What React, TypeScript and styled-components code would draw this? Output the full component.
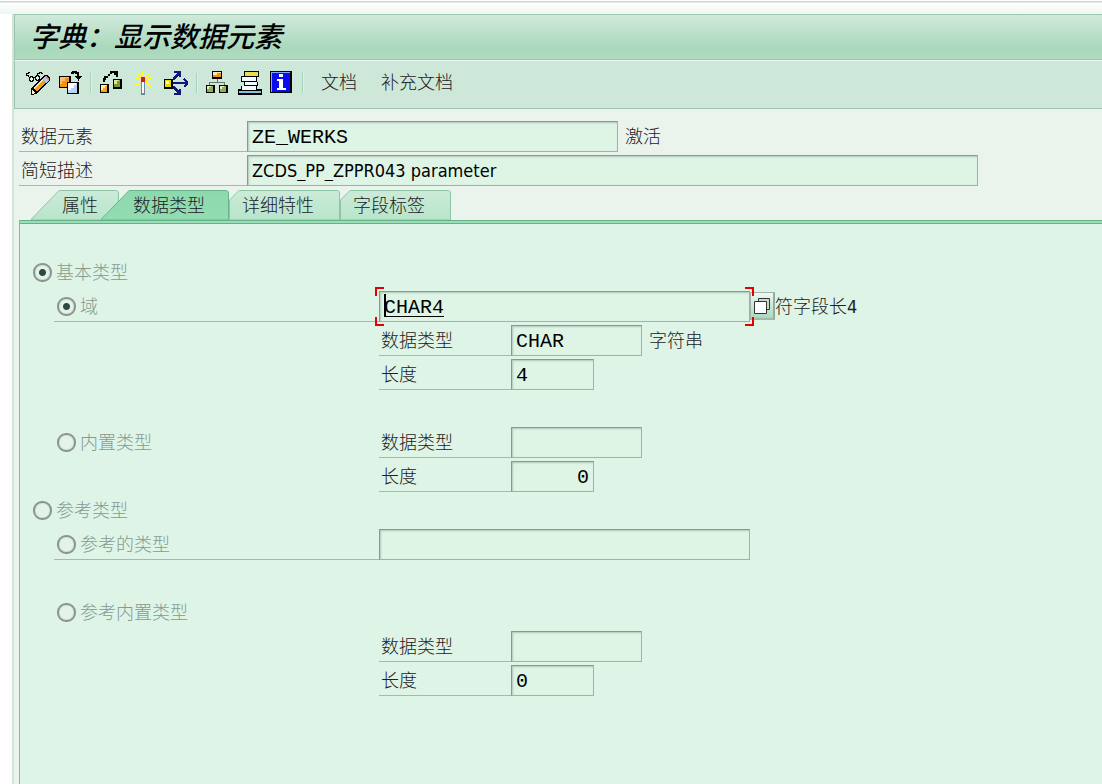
import React, { ReactNode } from "react";
import styled, { createGlobalStyle } from "styled-components";

const Global = createGlobalStyle`
  * { box-sizing: border-box; }
  body { margin: 0; background: #eaf4ed; }
  button, input { font: inherit; color: inherit; }
`;

const cjk = `"DejaVu Sans Condensed", "Noto Sans CJK SC", sans-serif`;

const Page = styled.div`
  min-height: 100vh;
  display: flex;
  flex-direction: column;
  padding: 14px 0 0 12px;
  background: linear-gradient(#fff 1px, #c9d8d0 1px, #c9d8d0 2px, #fff 3px, #eef7f2 14px) no-repeat 0 0 / 100% 14px, #fff;
  font-family: ${cjk};
  font-size: 18px;
  font-weight: 300;
  line-height: 24px;
  color: #1c211e;
  overflow-x: hidden;
`;

const Frame = styled.div`
  flex: 1;
  display: flex;
  flex-direction: column;
  border-left: 2px solid #d3e5da;
  background: #eaf4ed;
`;

const TitleBar = styled.header`
  height: 46px;
  display: flex;
  align-items: center;
  padding-left: 15px;
  border: 1px solid #9cc4ae;
  border-right: 0;
  background: linear-gradient(#d0eadb, #a9d8bc 75%, #b0dcc2);
`;

const Title = styled.h1`
  margin: 0;
  padding-top: 2px;
  font-size: 28px;
  line-height: 36px;
  font-weight: 500;
  font-style: italic;
  color: #000;
`;

const Toolbar = styled.nav`
  height: 49px;
  display: flex;
  align-items: center;
  padding: 0 0 3px 7px;
  border: 1px solid #9cc4ae;
  border-top: 1px solid #edf7f1;
  border-right: 0;
  background: #cde8d8;
`;

const IconButton = styled.button`
  width: 32px;
  height: 28px;
  padding: 0 4px;
  border: 0;
  background: none;
  display: flex;
  align-items: center;
`;

const TextButton = styled.button`
  padding: 0;
  margin-left: 13px;
  margin-right: 11px;
  border: 0;
  background: none;
  white-space: nowrap;
`;

const Separator = styled.span`
  width: 2px;
  height: 20px;
  margin: 0 4px;
  background: #a3d3b8;
  border-right: 1px solid #def1e6;
`;

const Header = styled.section`
  padding: 12px 0 0 5px;
`;

const Line = styled.div`
  display: flex;
  height: 34px;
  align-items: flex-start;
`;

const Label = styled.label<{ $width: number }>`
  width: ${(p) => p.$width}px;
  height: 31px;
  flex: none;
  display: flex;
  align-items: center;
  padding: 2px 0 0 2px;
  border-bottom: 1px solid #a9b8af;
`;

const Field = styled.input<{ $width: number; $font?: "sans"; $right?: boolean; $link?: boolean }>`
  width: ${(p) => p.$width}px;
  height: 31px;
  flex: none;
  padding: ${(p) => (p.$font ? 0 : 2)}px 4px 0;
  border: 1px solid #a3b2a9;
  border-top-color: #8b9890;
  border-left-color: #8b9890;
  border-radius: 0;
  outline: 0;
  background: #def5e6;
  box-shadow: inset 1px 1px 2px #b0c6b9;
  font-family: ${(p) => (p.$font ? `"DejaVu Sans Condensed", sans-serif` : `"Liberation Mono", monospace`)};
  font-size: ${(p) => (p.$font ? 18 : 20)}px;
  line-height: 24px;
  text-align: ${(p) => (p.$right ? "right" : "left")};
  text-decoration: ${(p) => (p.$link ? "underline 1px" : "none")};
  text-underline-offset: 3px;
  color: #000;
`;

const Note = styled.span<{ $gap?: number }>`
  margin-left: ${(p) => p.$gap ?? 7}px;
  padding-top: 1px;
  line-height: 30px;
  white-space: nowrap;
`;

const Tabs = styled.div`
  display: flex;
  height: 31px;
  padding-left: 12px;
`;

const Tab = styled.button<{ $width: number; $pad: number; $lap?: number }>`
  position: relative;
  width: ${(p) => p.$width}px;
  height: 31px;
  flex: none;
  margin-left: ${(p) => p.$lap ?? 0}px;
  padding: 2px 0 0 ${(p) => p.$pad}px;
  border: 0;
  background: none;
  text-align: left;
`;

const TabShape = styled.svg`
  position: absolute;
  inset: 0;
`;

const TabText = styled.span`
  position: relative;
`;

const Panel = styled.main`
  flex: 1;
  margin-left: 5px;
  padding: 36px 0 40px 13px;
  border-left: 1px solid #7fbf9d;
  border-top: 1px solid #62b488;
  background: #def4e6;
  box-shadow: inset 0 2px #9cdcb6, inset 0 3px #62b488;
`;

const Choice = styled.label<{ $indent?: boolean; $ruled?: boolean }>`
  width: 325px;
  height: 31px;
  flex: none;
  display: flex;
  align-items: center;
  gap: 4px;
  margin-left: ${(p) => (p.$indent ? 21 : 0)}px;
  padding-left: ${(p) => (p.$indent ? 3 : 0)}px;
  border-bottom: 1px solid ${(p) => (p.$ruled ? "#a9b8af" : "transparent")};
  color: #869a8f;
`;

const ChoiceText = styled.span`
  padding-top: 2px;
`;

const Radio = styled.input`
  appearance: none;
  width: 19px;
  height: 19px;
  flex: none;
  margin: 0;
  border: 2px solid #89958e;
  border-radius: 9px;
  background: #e3f3e9;
  box-shadow: inset 0 0 0 1px #d2e2d8;
  &:checked {
    background: radial-gradient(circle, #2c4a42 3px, #e3f3e9 4px);
  }
`;

const Details = styled.div`
  margin-left: 346px;
`;

const Beside = styled.div`
  display: flex;
`;

const Focus = styled.div`
  position: relative;
  height: 31px;
`;

const Corners = styled.svg`
  position: absolute;
  left: -4px;
  top: -4px;
  pointer-events: none;
`;

const MatchButton = styled.button`
  width: 25px;
  height: 28px;
  margin-top: 1px;
  padding: 0;
  flex: none;
  border: 1px solid #a3b2a9;
  border-right: 2px solid #8fae9d;
  border-bottom: 2px solid #a3b8ac;
  background: linear-gradient(#f0f8f3, #a8d8bc);
  display: flex;
  align-items: center;
  justify-content: center;
`;

const Icon = ({ children }: { children: ReactNode }) => (
  <svg width="24" height="24" viewBox="0 0 24 24" shapeRendering="crispEdges" aria-hidden="true">{children}</svg>
);

const EditIcon = () => (
  <Icon>
    <path d="M5 24v-6L18 4h4l2 3v3L10 23z" fill="#000" />
    <path d="M7 17L16 8l4 4L11 20z" fill="#f59a1b" />
    <path d="M7 17L16 8l1 1L9 18z" fill="#ffe7a5" />
    <path d="M16 8l3-3 4 4-3 3z" fill="#a9c8ee" />
    <path d="M19 5h2l2 3v1h-1z" fill="#e78376" />
    <path d="M6 19l3 3-3 1z" fill="#fff4cc" />
    <path d="M4 5h2v1h1v3H6v1H4V9H3V6h1zM10 4h2v1h1v3h-1v1h-2V8H9V5h1z" fill="#e9f6ef" stroke="#000" strokeWidth="1" />
    <path d="M2 6V4H0V2h2V1h2M7 6h2M11 4V2h2V1h2v1h2" stroke="#000" strokeWidth="1" fill="none" />
  </Icon>
);
const OtherObjectIcon = () => (
  <Icon>
    <path d="M1 5h12v12H1z" fill="#000" /><path d="M2 6h9v10H2z" fill="#f39310" /><path d="M2 6h9v1H7v3H4v3H2z" fill="#ffc06c" />
    <path d="M9 11h12v12H9z" fill="#000" /><path d="M10 12h9v10h-9z" fill="#b9d4f4" /><path d="M10 12h8v2h-2v3h-3v2h-3z" fill="#fff" />
    <path d="M13 2h2V1h3v1h2v4" stroke="#000" strokeWidth="1.500" fill="none" /><path d="M17 5h7v1h-1v1h-1v1h-1v2h-1V8h-1V7h-1V6h-1z" fill="#000" />
  </Icon>
);
const CheckIcon = () => (
  <Icon>
    <path d="M4 11V8h1V6h2V5M8 4h2M11 3V1h3M14 3h3" stroke="#000" strokeWidth="1.500" fill="none" />
    <path d="M14 0h4v6h-2V4h-2z" fill="#000" />
    <path d="M0 13h9v9H0z" fill="#000" /><path d="M1 14h6v7H1z" fill="#f5a61c" /><path d="M1 14h6v1H5v2H3v2H1z" fill="#fff09b" />
    <path d="M13 8h9v10h-9z" fill="#000" /><path d="M14 9h6v7h-6z" fill="#809b27" /><path d="M14 9h5v1h-2v3h-3z" fill="#d9e995" />
  </Icon>
);
const ActivateIcon = () => (
  <Icon>
    <path d="M11 0v5M5 2l4 5M17 2l-4 5M3 7l5 2M19 7l-5 2M8 12l-5 3M14 12l5 3" stroke="#ffff00" strokeWidth="2" />
    <path d="M9 6h4v5H9z" fill="#ee1111" /><path d="M9 11h4v13H9z" fill="#71869a" /><path d="M10 11h2v11h-2z" fill="#fff" />
  </Icon>
);
const WhereUsedIcon = () => (
  <Icon>
    <path d="M0 8h9v10H0z" fill="#000" /><path d="M1 9h6v7H1z" fill="#e5d900" /><path d="M2 10h3v3H2z" fill="#ffffb0" />
    <path d="M9 11h15v2H9z" fill="#15157e" />
    <path d="M20 8l4 4-4 4M9 8h1V7h1V6h1V5h1V4h1V3h2M10 1h6v5M9 16h1v1h1v1h1v1h1v1h1v1h2M10 23h6v-5" stroke="#15157e" strokeWidth="1.500" fill="none" />
  </Icon>
);
const HierarchyIcon = () => (
  <Icon>
    <path d="M11 8v3M3 15v-4h15v4" stroke="#68746e" strokeWidth="1" fill="none" />
    <path d="M6 0h10v8H6z" fill="#000" /><path d="M7 1h8v5H7z" fill="#ee9513" /><path d="M7 1h8v1h-4v2H7z" fill="#ffe9a8" />
    <path d="M0 14h9v8H0zM13 14h9v8h-9z" fill="#000" /><path d="M1 15h6v6H1zM14 15h6v6h-6z" fill="#91ac5b" /><path d="M1 15h4v1H3v2H1zM14 15h4v1h-2v2h-2z" fill="#e4efc4" />
  </Icon>
);
const StackIcon = () => (
  <Icon>
    <path d="M0 18h3v-3h3v-4H3V5h3V0h15v6h-2v5h1v4h-1v3h5v6H0z" fill="#000" />
    <path d="M7 1h13v4H7z" fill="#eadb50" /><path d="M4 6h14v4H4zM7 11h12v3H7zM4 15h14v4H4z" fill="#f4f8ff" /><path d="M1 20h22v2H1z" fill="#86c3dd" />
    <path d="M4 19h14v1H4z" fill="#000" />
  </Icon>
);
const InfoIcon = () => (
  <Icon>
    <path d="M0 0h22v22H0z" fill="#000" /><path d="M1 1h19v20H1z" fill="#0b0bef" /><path d="M1 1h19v1H2v19H1z" fill="#7baaff" />
    <path d="M9 3h4v3H9zM7 8h6v9h3v2H7v-2h2v-7H7z" fill="#fff" />
  </Icon>
);

const tabs = [
  { text: "属性", width: 88, pad: 31, lap: 0, slant: 28 },
  { text: "数据类型", width: 128, pad: 32, lap: -18, slant: 28, active: true },
  { text: "详细特性", width: 111, pad: 13, lap: 0, slant: 10 },
  { text: "字段标签", width: 111, pad: 13, lap: 0, slant: 10 },
];

const TabItem = ({ text, width, pad, lap, slant, active }: (typeof tabs)[number]) => {
  const foot = slant > 20 ? 30 : 11;
  return (
    <Tab role="tab" aria-selected={!!active} $width={width} $pad={pad} $lap={lap}>
      <TabShape width={width} height="31">
        <defs>
          <linearGradient id={text} x2="0" y2="1">
            <stop stopColor={active ? "#8dd9ae" : "#cbebd8"} /><stop offset="1" stopColor={active ? "#94dcb3" : "#b8e5cb"} />
          </linearGradient>
        </defs>
        <path d={`M.5 31V${foot}L${slant} 1.5H${width - 2}l1.5 1.5V31z`} fill={`url(#${text})`} stroke={active ? "#66b68a" : "#8dc5a5"} />
      </TabShape>
      <TabText>{text}</TabText>
    </Tab>
  );
};

const TypeFields = ({ id, type, length, right, note }: { id: string; type: string; length: string; right?: boolean; note?: string }) => (
  <div>
    <Line>
      <Label htmlFor={`${id}-type`} $width={132}>数据类型</Label>
      <Field id={`${id}-type`} $width={131} defaultValue={type} readOnly />
      {note && <Note>{note}</Note>}
    </Line>
    <Line>
      <Label htmlFor={`${id}-length`} $width={132}>长度</Label>
      <Field id={`${id}-length`} $width={83} $right={right} defaultValue={length} readOnly />
    </Line>
  </div>
);

const Option = ({ text, checked, indent, ruled, group }: { text: string; checked?: boolean; indent?: boolean; ruled?: boolean; group: string }) => (
  <Choice $indent={indent} $ruled={ruled}>
    <Radio type="radio" name={group} defaultChecked={checked} />
    <ChoiceText>{text}</ChoiceText>
  </Choice>
);

const Gap = styled.div`
  height: 34px;
`;

export default function App() {
  return (
    <Page>
      <Global />
      <Frame>
        <TitleBar><Title>字典：显示数据元素</Title></TitleBar>
        <Toolbar>
          <IconButton aria-label="编辑"><EditIcon /></IconButton>
          <IconButton aria-label="其他对象"><OtherObjectIcon /></IconButton>
          <Separator />
          <IconButton aria-label="检查"><CheckIcon /></IconButton>
          <IconButton aria-label="激活"><ActivateIcon /></IconButton>
          <IconButton aria-label="使用处清单"><WhereUsedIcon /></IconButton>
          <Separator />
          <IconButton aria-label="层次"><HierarchyIcon /></IconButton>
          <IconButton aria-label="对象"><StackIcon /></IconButton>
          <IconButton aria-label="帮助"><InfoIcon /></IconButton>
          <Separator />
          <TextButton>文档</TextButton>
          <TextButton>补充文档</TextButton>
        </Toolbar>
        <Header>
          <Line>
            <Label htmlFor="element" $width={228}>数据元素</Label>
            <Field id="element" $width={371} defaultValue="ZE_WERKS" readOnly />
            <Note>激活</Note>
          </Line>
          <Line>
            <Label htmlFor="description" $width={228}>简短描述</Label>
            <Field id="description" $width={731} $font="sans" defaultValue="ZCDS_PP_ZPPR043 parameter" readOnly />
          </Line>
          <Tabs role="tablist">{tabs.map((t) => <TabItem key={t.text} {...t} />)}</Tabs>
        </Header>
        <Panel>
          <Line><Option group="kind" text="基本类型" checked /></Line>
          <Line>
            <Option group="basic" text="域" checked indent ruled />
            <Focus>
              <Field aria-label="域" $width={371} $link defaultValue="CHAR4" readOnly />
              <Corners width="380" height="40" fill="none" stroke="#e60000" strokeWidth="2">
                <path d="M1 9V1h8M370 1h8v8M1 30v8h8M370 38h8v-8" />
                <path d="M10 7v23" stroke="#000" />
              </Corners>
            </Focus>
            <MatchButton aria-label="选择">
              <svg width="18" height="18" fill="#fff" stroke="#333"><path d="M5.500 1.500h11v11h-11z" fill="#c5dccf" /><path d="M1.500 4.500h12v12h-12z" /></svg>
            </MatchButton>
            <Note $gap={0}>符字段长4</Note>
          </Line>
          <Details><TypeFields id="domain" type="CHAR" length="4" note="字符串" /></Details>
          <Gap />
          <Beside>
            <Option group="basic" text="内置类型" indent />
            <TypeFields id="builtin" type="" length="0" right />
          </Beside>
          <Line><Option group="kind" text="参考类型" /></Line>
          <Line>
            <Option group="reference" text="参考的类型" indent ruled />
            <Field aria-label="参考的类型" $width={371} defaultValue="" readOnly />
          </Line>
          <Gap />
          <Line><Option group="reference" text="参考内置类型" indent /></Line>
          <Details><TypeFields id="refbuiltin" type="" length="0" /></Details>
        </Panel>
      </Frame>
    </Page>
  );
}
